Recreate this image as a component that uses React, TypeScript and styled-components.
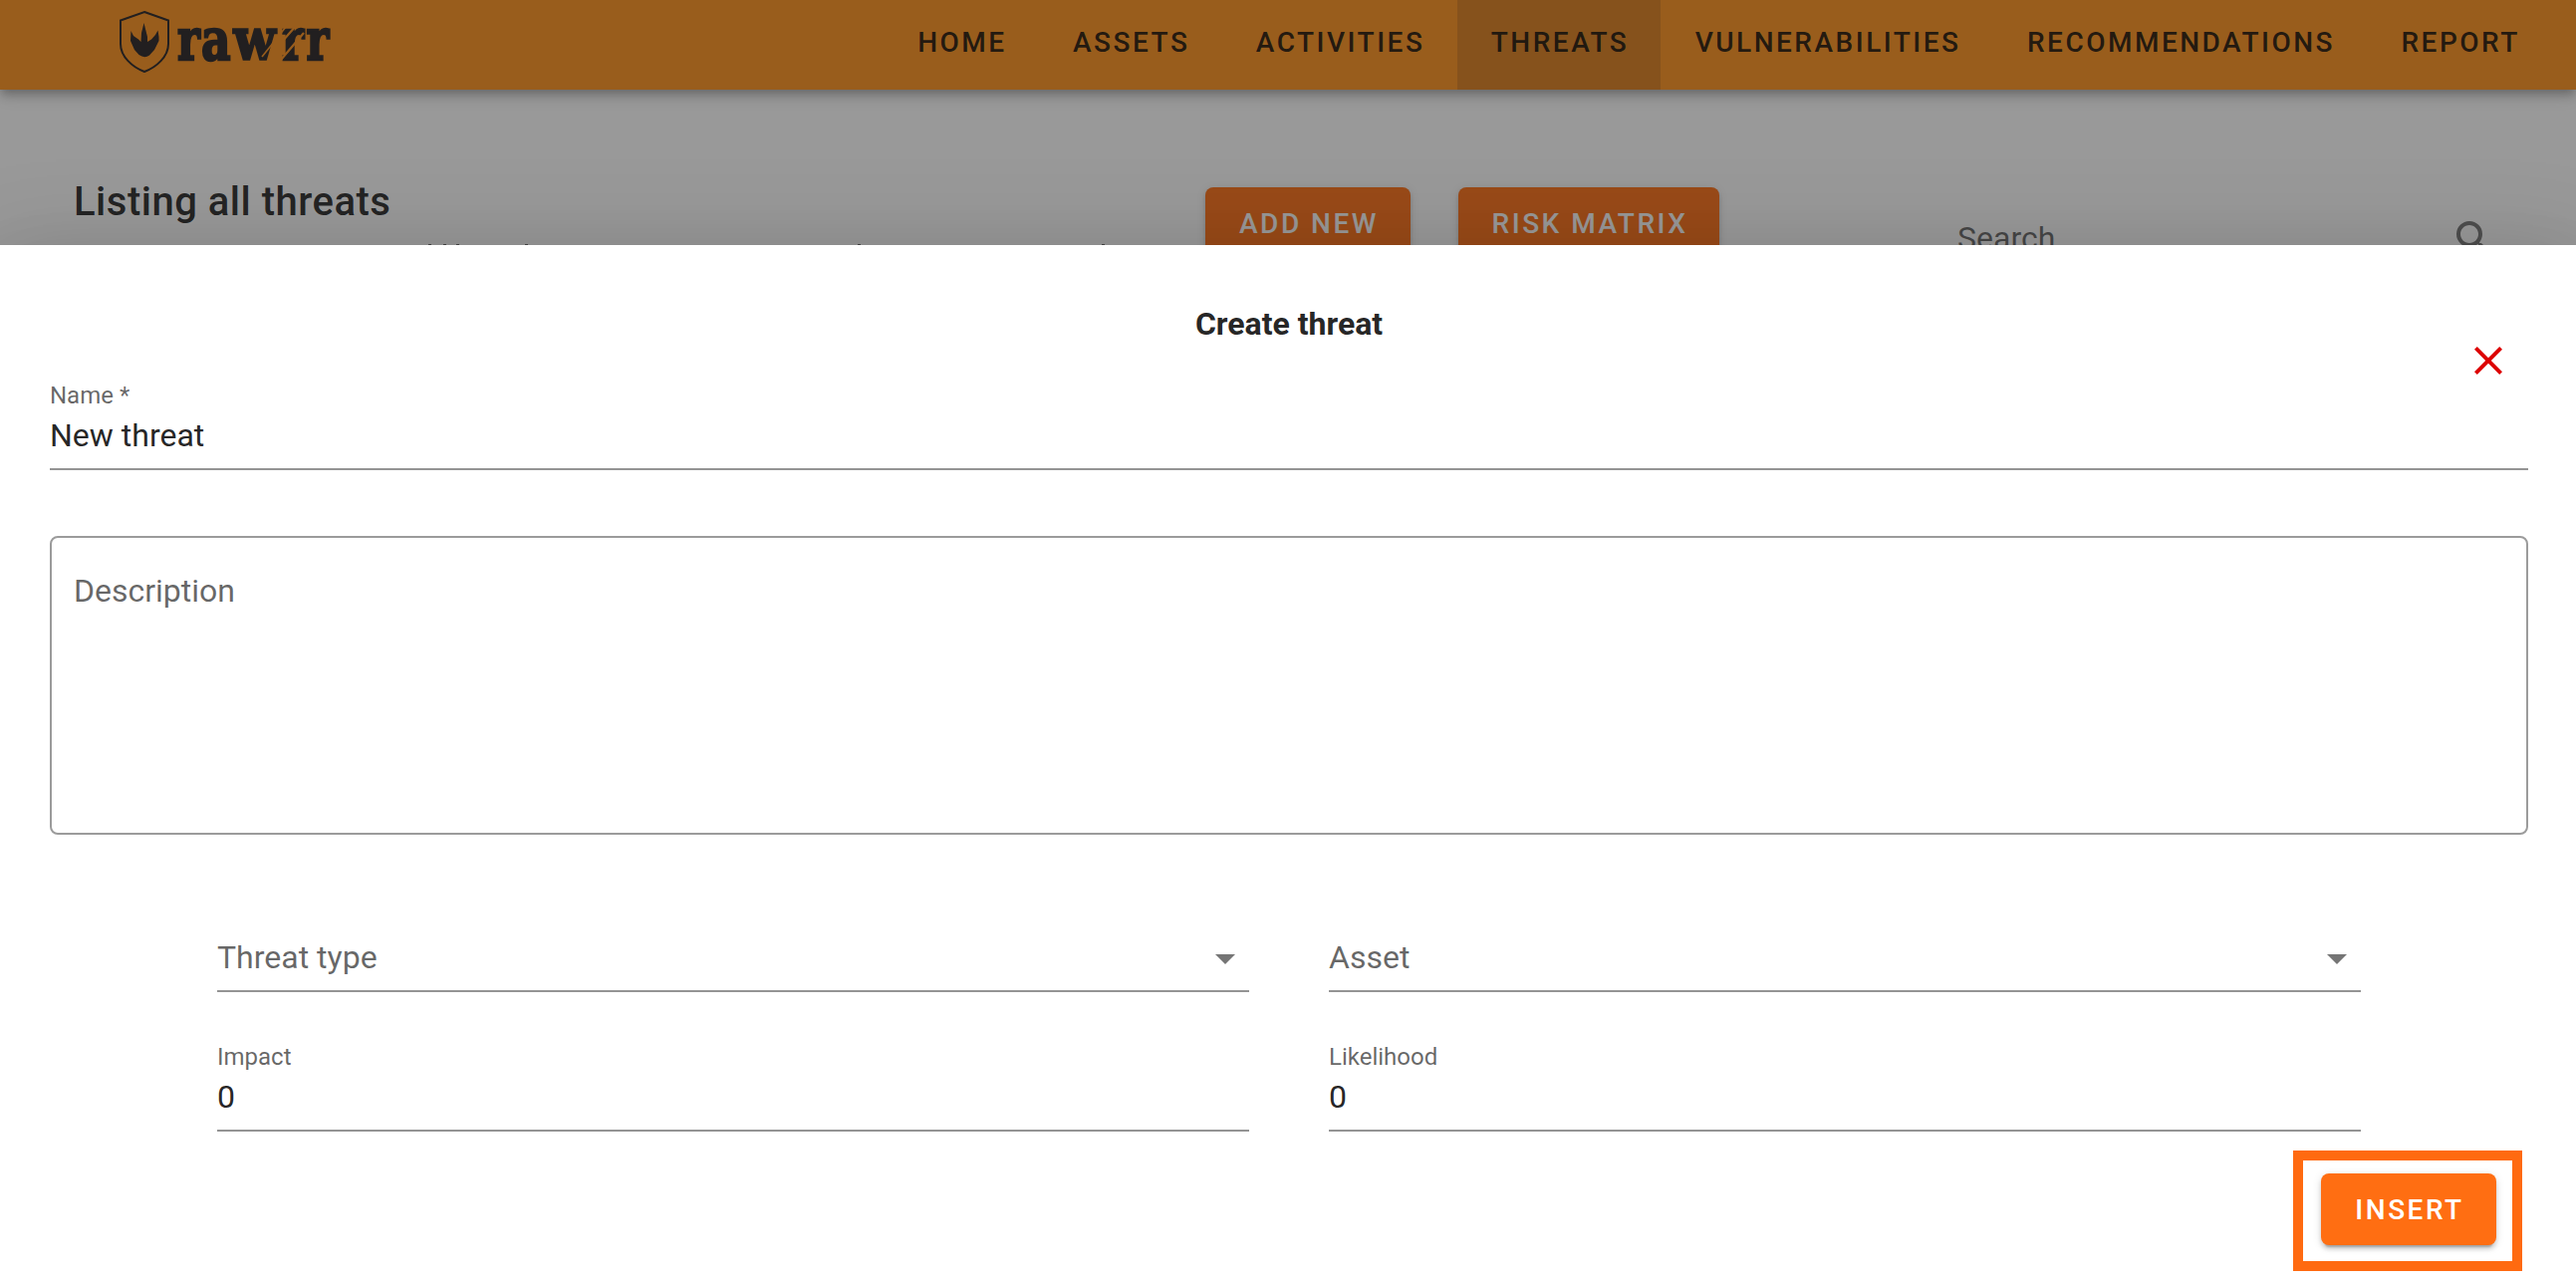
import React from 'react';
import styled, { createGlobalStyle } from 'styled-components';

const GlobalStyle = createGlobalStyle`
  * { box-sizing: border-box; }
  body { margin: 0; background: #fff; overflow: hidden; }
`;

const Page = styled.div`
  position: relative;
  width: 2586px;
  height: 1288px;
  overflow: hidden;
  font-family: Roboto, 'Liberation Sans', sans-serif;
  color: rgba(0, 0, 0, 0.87);
  background: #fff;
`;

const AppBar = styled.header`
  position: relative;
  display: flex;
  justify-content: space-between;
  height: 90px;
  padding: 0 24px 0 119px;
  background: #ff9019;
  box-shadow: 0 4px 8px -2px rgba(0, 0, 0, 0.2), 0 8px 10px rgba(0, 0, 0, 0.14),
    0 2px 20px rgba(0, 0, 0, 0.12);
`;

const Logo = styled.svg`
  display: block;
  width: 216px;
  height: 80px;
`;

const Nav = styled.nav`
  display: flex;
`;

const Tab = styled.a<{ $active?: boolean }>`
  display: flex;
  align-items: center;
  height: 90px;
  padding: 0 32.2px 6px 34.2px;
  font-size: 28px;
  font-weight: 500;
  letter-spacing: 2.5px;
  color: rgba(0, 0, 0, 0.87);
  background: ${(p) => (p.$active ? 'rgba(36, 31, 25, 0.16)' : 'transparent')};
`;

const Toolbar = styled.section`
  display: flex;
  align-items: flex-start;
  height: 200px;
  padding: 0 78px 0 74px;
`;

const Heading = styled.div`
  width: 1136px;
  padding-top: 89px;
`;

const PageTitle = styled.h1`
  margin: 0;
  font-size: 40px;
  font-weight: 500;
  line-height: 48px;
  letter-spacing: 0.5px;
`;

const Subtitle = styled.div`
  display: flex;
  height: 1px;
  margin-top: 18px;
`;

const Ascender = styled.i<{ $gap: number }>`
  flex: none;
  width: 3px;
  height: 1px;
  margin-left: ${(p) => p.$gap}px;
  background: rgba(0, 0, 0, 0.6);
`;

const Actions = styled.div`
  display: flex;
  gap: 48px;
  padding-top: 98px;
`;

const Button = styled.button<{ $width: number }>`
  width: ${(p) => p.$width}px;
  height: 72px;
  padding: 0 0 0 2px;
  border: 0;
  border-radius: 8px;
  background: #ff6e12;
  color: #fff;
  font: 500 28px Roboto, 'Liberation Sans', sans-serif;
  letter-spacing: 2.5px;
  box-shadow: 0 6px 2px -4px rgba(0, 0, 0, 0.2), 0 4px 4px rgba(0, 0, 0, 0.14),
    0 2px 10px rgba(0, 0, 0, 0.12);
`;

const SearchField = styled.div`
  display: flex;
  justify-content: space-between;
  width: 543px;
  margin: 126px 0 0 auto;
  font-size: 32px;
  line-height: 46px;
  color: rgba(0, 0, 0, 0.6);
`;

const Icon = styled.svg<{ $color: string; $top?: number }>`
  display: block;
  width: 48px;
  height: 48px;
  margin-top: ${(p) => p.$top ?? 0}px;
  fill: ${(p) => p.$color};
`;

const Overlay = styled.div`
  position: absolute;
  inset: 0;
  background: rgba(33, 33, 33, 0.46);
`;

const Sheet = styled.section`
  position: absolute;
  inset: 246px 0 0;
  padding: 58px 48px 0 50px;
  background: #fff;
  box-shadow: 0 22px 30px -14px rgba(0, 0, 0, 0.2), 0 48px 76px 6px rgba(0, 0, 0, 0.14),
    0 18px 92px 16px rgba(0, 0, 0, 0.12);
`;

const SheetTitle = styled.h2`
  margin: 0;
  height: 34px;
  font-size: 32px;
  font-weight: 700;
  line-height: 42px;
  text-align: center;
`;

const CloseRow = styled.div`
  display: flex;
  justify-content: flex-end;
  height: 42px;
  padding-right: 16px;
`;

const Field = styled.div`
  display: flex;
  flex-direction: column;
  height: 92px;
  border-bottom: 2px solid #949494;
`;

const FieldLabel = styled.label`
  padding-top: 3px;
  font-size: 24px;
  line-height: 28px;
  color: rgba(0, 0, 0, 0.6);
`;

const FieldValue = styled.div`
  padding-top: 6px;
  font-size: 32px;
  line-height: 40px;
`;

const TextArea = styled.div`
  height: 300px;
  margin-top: 66px;
  padding: 33px 22px;
  border: 2px solid #9b9b9b;
  border-radius: 8px;
  font-size: 32px;
  line-height: 40px;
  color: rgba(0, 0, 0, 0.6);
`;

const Columns = styled.div`
  display: grid;
  grid-template-columns: 1036px 1036px;
  column-gap: 80px;
  row-gap: 48px;
  padding: 98px 0 0 168px;
`;

const Select = styled.div`
  display: flex;
  justify-content: space-between;
  height: 60px;
  border-bottom: 2px solid #949494;
  font-size: 32px;
  line-height: 50px;
  color: rgba(0, 0, 0, 0.6);
`;

const Footer = styled.footer`
  display: flex;
  justify-content: flex-end;
  padding: 19px 6px 0 0;
`;

const Highlight = styled.div`
  width: 230px;
  height: 121px;
  padding: 13px 18px;
  border: 10px solid #ff6a10;
`;

const tabs = ['HOME', 'ASSETS', 'ACTIVITIES', 'THREATS', 'VULNERABILITIES', 'RECOMMENDATIONS', 'REPORT'];

const ascenderGaps = [356, 12, 10, 66, 331, 242];

const letters = [
  { ch: 'r', x: 59, sx: 0.76 },
  { ch: 'a', x: 83, sx: 0.8 },
  { ch: 'w', x: 115.5, sx: 0.86 },
  { ch: 'r', x: 164, sx: 0.74 },
  { ch: 'r', x: 188.5, sx: 0.76 },
];

const RawrrLogo = () => (
  <Logo viewBox="0 0 216 80">
    <path
      d="M26 12 50 20.5V44C50 57 38 67.5 26 72 14 67.5 2 57 2 44V20.5Z"
      fill="none"
      stroke="#231f20"
      strokeWidth="2"
    />
    <path
      d="M25.5 23 29 37V42L33 39.5 37 35 39.5 30.5 40.5 37V41L36 50 31 55.5Q26 59 20.5 55L16 50 12 41 12.5 31 15 36 20 39.5 22.5 42 23 33Z"
      fill="#231f20"
    />
    {letters.map((l, i) => (
      <text
        key={i}
        transform={`translate(${l.x} 60) scale(${l.sx} 1)`}
        fontFamily="'DejaVu Serif', serif"
        fontWeight="700"
        fontSize="57"
        fill="#231f20"
        stroke="#231f20"
        strokeWidth="2.4"
      >
        {l.ch}
      </text>
    ))}
    <path d="M144 57 168 27" stroke="#ff9019" strokeWidth="1.6" />
    <path d="M164 42 178 26M163 60 186 33" stroke="#ff9019" strokeWidth="2.2" />
  </Logo>
);

const SelectField = ({ label }: { label: string }) => (
  <Select>
    {label}
    <Icon viewBox="0 0 24 24" $color="rgba(0,0,0,.54)" $top={2}>
      <path d="M7 10l5 5 5-5z" />
    </Icon>
  </Select>
);

const TextField = ({ label, value }: { label: string; value: string }) => (
  <Field>
    <FieldLabel>{label}</FieldLabel>
    <FieldValue>{value}</FieldValue>
  </Field>
);

export default function App() {
  return (
    <Page>
      <GlobalStyle />
      <AppBar>
        <RawrrLogo />
        <Nav>
          {tabs.map((t) => (
            <Tab key={t} $active={t === 'THREATS'}>
              {t}
            </Tab>
          ))}
        </Nav>
      </AppBar>
      <Toolbar>
        <Heading>
          <PageTitle>Listing all threats</PageTitle>
          <Subtitle>
            {ascenderGaps.map((gap, i) => (
              <Ascender key={i} $gap={gap} />
            ))}
          </Subtitle>
        </Heading>
        <Actions>
          <Button $width={206}>ADD NEW</Button>
          <Button $width={262}>RISK MATRIX</Button>
        </Actions>
        <SearchField>
          Search
          <Icon viewBox="0 0 24 24" $color="rgba(0,0,0,.54)">
            <path d="M9.5 3A6.5 6.5 0 0 1 16 9.5C16 11.11 15.41 12.59 14.44 13.73L14.71 14H15.5L20.5 19L19 20.5L14 15.5V14.71L13.73 14.44C12.59 15.41 11.11 16 9.5 16A6.5 6.5 0 0 1 3 9.5A6.5 6.5 0 0 1 9.5 3M9.5 5C7 5 5 7 5 9.5C5 12 7 14 9.5 14C12 14 14 12 14 9.5C14 7 12 5 9.5 5Z" />
          </Icon>
        </SearchField>
      </Toolbar>
      <Overlay />
      <Sheet>
        <SheetTitle>Create threat</SheetTitle>
        <CloseRow>
          <Icon viewBox="0 0 24 24" $color="#dd0000">
            <path d="M19 6.41L17.59 5L12 10.59L6.41 5L5 6.41L10.59 12L5 17.59L6.41 19L12 13.41L17.59 19L19 17.59L13.41 12L19 6.41Z" />
          </Icon>
        </CloseRow>
        <TextField label="Name *" value="New threat" />
        <TextArea>Description</TextArea>
        <Columns>
          <SelectField label="Threat type" />
          <SelectField label="Asset" />
          <TextField label="Impact" value="0" />
          <TextField label="Likelihood" value="0" />
        </Columns>
        <Footer>
          <Highlight>
            <Button $width={176}>INSERT</Button>
          </Highlight>
        </Footer>
      </Sheet>
    </Page>
  );
}
